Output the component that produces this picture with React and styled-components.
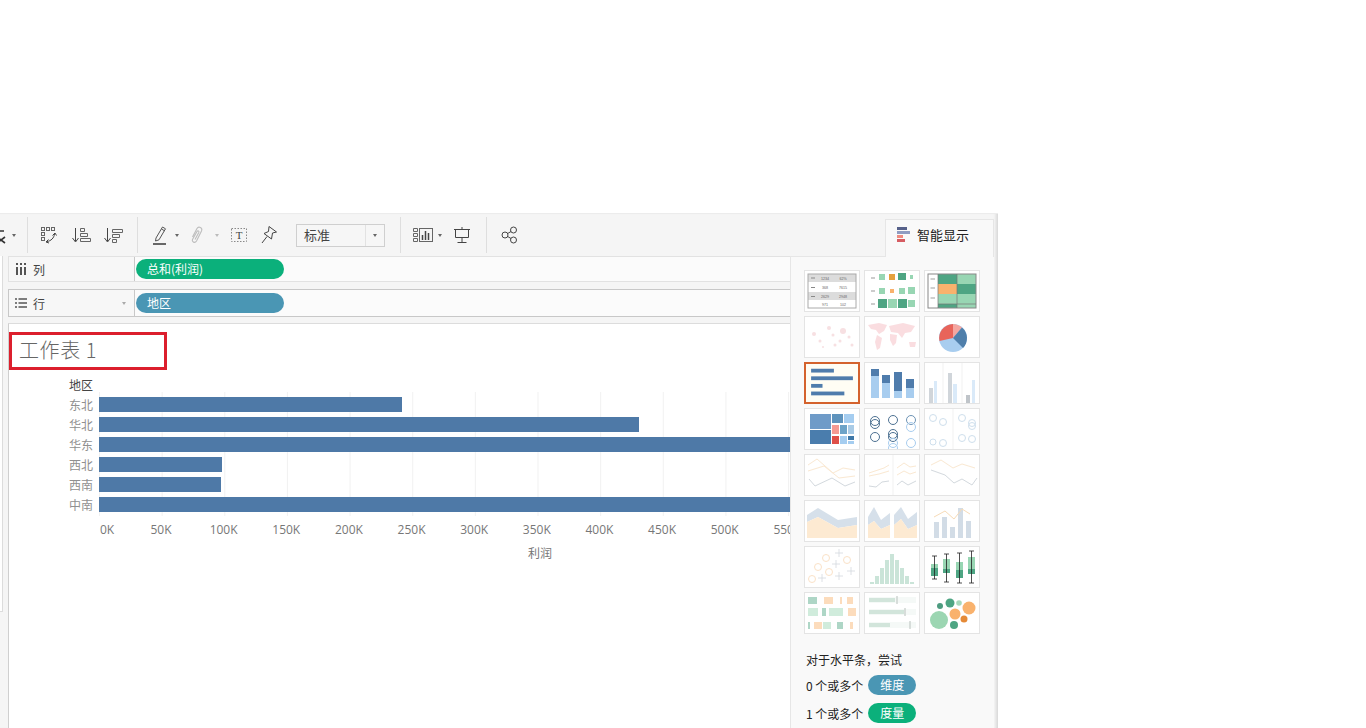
import styled, { createGlobalStyle } from "styled-components";

const GlobalStyle = createGlobalStyle`
  html, body {
    margin: 0;
    padding: 0;
    background: #fff;
    overflow: hidden;
    font-family: "Noto Sans CJK SC", "Liberation Sans", sans-serif;
  }
  * { box-sizing: border-box; }
`;

const Window = styled.div`
  margin-top: 213px;
  width: 998px;
  height: 515px;
  display: flex;
  flex-direction: column;
  overflow: hidden;
  background: #f5f5f5;
  border-top: 1px solid #ececec;
  box-shadow: inset -4px 0 3px -2px #d8d8d8;
`;

const Toolbar = styled.div`
  height: 42px;
  flex: none;
  display: flex;
  align-items: stretch;
`;

const Group = styled.div`
  display: flex;
  align-items: center;
  padding: 0 ${(p) => p.$right || 0}px 0 ${(p) => p.$left || 0}px;
  border-right: ${(p) => (p.$last ? "none" : "1px solid #dedede")};
  height: 36px;
  align-self: center;
`;

const Tool = styled.div`
  width: ${(p) => p.$w}px;
  height: 30px;
  flex: none;
  display: flex;
  align-items: center;
  justify-content: center;
  overflow: hidden;
`;

const Caret = styled.span`
  width: 0;
  height: 0;
  border-left: 2.5px solid transparent;
  border-right: 2.5px solid transparent;
  border-top: 3px solid ${(p) => p.$color || "#666"};
`;

const SelectBox = styled.div`
  width: 89px;
  height: 23px;
  margin-left: 14px;
  flex: none;
  display: flex;
  align-items: center;
  border: 1px solid #cfcfcf;
  background: #f6f6f6;
  font-size: 13px;
  color: #444;
`;

const SelectText = styled.span`
  flex: 1;
  padding: 0 0 1px 7px;
  line-height: 20px;
`;

const SelectArrow = styled.span`
  width: 19px;
  height: 21px;
  display: flex;
  align-items: center;
  justify-content: center;
  border-left: 1px solid #e2e2e2;
`;

const ShowMeTab = styled.div`
  margin: 4px 4px 0 auto;
  width: 109px;
  display: flex;
  align-items: center;
  gap: 7px;
  padding: 0 0 9px 11px;
  font-size: 13px;
  color: #222;
  background: #f9f9f9;
  border: 1px solid #e6e6e6;
  border-bottom: none;
  position: relative;
  top: 1px;
`;

const Body = styled.div`
  flex: 1;
  min-height: 0;
  display: flex;
`;

const LeftStub = styled.div`
  width: 8px;
  flex: none;
`;

const LeftCard = styled.div`
  width: 3px;
  height: 356px;
  background: #fff;
  border-right: 1px solid #dcdcdc;
  border-bottom: 1px solid #dcdcdc;
`;

const Center = styled.div`
  width: 782px;
  flex: none;
  display: flex;
  flex-direction: column;
  overflow: hidden;
`;

const ShelfRow = styled.div`
  height: ${(p) => p.$h}px;
  margin-bottom: ${(p) => p.$gap}px;
  flex: none;
  display: flex;
  background: #fbfbfb;
  border: 1px solid ${(p) => p.$line};
  border-right: none;
`;

const ShelfLabel = styled.div`
  width: 126px;
  flex: none;
  display: flex;
  align-items: center;
  gap: 6px;
  padding-left: 6px;
  font-size: 12px;
  color: #444;
  background: #f7f7f7;
  border-right: 1px solid #c8c8c8;
`;

const LabelCaret = styled.span`
  margin-left: auto;
  margin-right: 8px;
  display: flex;
`;

const ShelfDrop = styled.div`
  flex: 1;
  display: flex;
  align-items: center;
  padding-left: 1px;
`;

const Pill = styled.div`
  width: 148px;
  height: 20px;
  border-radius: 10px;
  background: ${(p) => p.$color};
  color: #fff;
  font-size: 12px;
  line-height: 20px;
  padding-left: 11px;
`;

const Sheet = styled.div`
  flex: 1;
  min-height: 0;
  background: #fff;
  border-top: 1px solid #dcdcdc;
  border-left: 1px solid #cfcfcf;
  overflow: hidden;
`;

const TitleBox = styled.div`
  width: 158px;
  height: 38px;
  margin-top: 8px;
  padding: 0 0 4px 7px;
  display: flex;
  align-items: center;
  border: 3px solid #dc1f2d;
  font-size: 20px;
  font-weight: 300;
  letter-spacing: 0.6px;
  color: #666;
`;

const Chart = styled.div`
  display: flex;
  margin-top: 5px;
`;

const LabelColumn = styled.div`
  width: 90px;
  flex: none;
  text-align: right;
  padding-right: 6px;
  font-size: 12px;
  line-height: 20px;
  color: #909090;
`;

const FieldName = styled.div`
  color: #444;
`;

const PlotColumn = styled.div`
  flex: 1;
  min-width: 0;
  margin-top: 17px;
`;

const Plot = styled.div`
  height: 124px;
  padding-top: 3px;
  overflow: hidden;
  background-size: 62.65px 100%;
  background-image: linear-gradient(90deg, #f1f1f1 1px, transparent 1px);
`;

const BarRow = styled.div`
  height: 20px;
  padding-top: 2px;
`;

const Bar = styled.div`
  height: 15px;
  background: #4e79a7;
`;

const AxisTicks = styled.div`
  display: flex;
  margin: 6px 0 0 -32px;
  height: 16px;
`;

const Tick = styled.div`
  width: 62.65px;
  flex: none;
  font-family: "Open Sans", "Liberation Sans", sans-serif;
  font-size: 12px;
  line-height: 16px;
  color: #777;
  padding-left: ${(p) => (p.$first ? "33px" : "0")};
  text-align: ${(p) => (p.$first ? "left" : "center")};
`;

const AxisTitle = styled.div`
  margin: 7px 0 0 429px;
  font-size: 12px;
  line-height: 16px;
  color: #777;
`;

const ShowMePanel = styled.div`
  width: 204px;
  flex: none;
  padding: 13px 14px 0 13px;
  background: #f9f9f9;
  border-left: 1px solid #e6e6e6;
  border-top: 1px solid #e6e6e6;
  margin-right: 4px;
`;

const ThumbGrid = styled.div`
  display: grid;
  grid-template-columns: repeat(3, 56px);
  grid-auto-rows: 42px;
  gap: 4px;
`;

const Thumb = styled.div`
  background: ${(p) => (p.$selected ? "#fffdf4" : "#fff")};
  border: ${(p) => (p.$selected ? "2px solid #d4622d" : "1px solid #e4e4e4")};
  overflow: hidden;

  svg {
    display: block;
    width: 100%;
    height: 100%;
    opacity: ${(p) => p.$fade || 1};
  }
`;

const Hint = styled.div`
  margin: 17px 0 0 2px;
  font-size: 12px;
  line-height: 18px;
  color: #222;
`;

const HintRow = styled.div`
  display: flex;
  align-items: center;
  gap: 5px;
  height: 20px;
  margin: ${(p) => p.$gap}px 0 0 2px;
  font-size: 12px;
  color: #222;
`;

const SmallPill = styled.span`
  width: 48px;
  height: 20px;
  border-radius: 10px;
  background: ${(p) => p.$color};
  color: #fff;
  text-align: center;
  line-height: 20px;
`;

const GREEN = "#0bb07b";
const TEAL = "#4a96b4";

const Ico = ({ w = 20, h = 20, children, ...rest }) => (
  <svg width={w} height={h} viewBox={`0 0 ${w} ${h}`} fill="none" stroke="#555" strokeWidth="1" {...rest}>
    {children}
  </svg>
);

const CutIcon = () => (
  <Ico w={10} h={20}>
    <path d="M-3 6 L4 6 M-3 12 L5 18 M-3 18 L5 12" stroke="#333" strokeWidth="1.6" />
  </Ico>
);

const SwapIcon = () => (
  <Ico>
    <g stroke="#666">
      <rect x="2.5" y="2.5" width="3" height="3" />
      <rect x="7.5" y="2.5" width="3" height="3" />
      <rect x="12.5" y="2.5" width="3" height="3" />
      <rect x="2.5" y="7.5" width="3" height="3" />
      <rect x="2.5" y="12.5" width="3" height="3" />
      <path d="M8 16.5 C12 16 15 13 15.5 9 M13.5 10.5 L16 8 L17.5 10.5 M9.5 14.5 L7 17 L10 18" stroke="#444" />
    </g>
  </Ico>
);

const SortIcon = ({ desc }) => (
  <Ico>
    <path d="M4.5 3 V16 M1.5 13 L4.5 17 L7.5 13" stroke="#444" />
    {desc ? (
      <path d="M9.5 4.5 H19.5 V7.5 H9.5 Z M9.5 9.5 H16.5 V12.5 H9.5 Z M9.5 14.5 H13.5 V17.5 H9.5 Z" stroke="#666" />
    ) : (
      <path d="M9.5 3.5 H13.5 V6.5 H9.5 Z M9.5 8.5 H16.5 V11.5 H9.5 Z M9.5 13.5 H19.5 V16.5 H9.5 Z" stroke="#666" />
    )}
  </Ico>
);

const PenIcon = () => (
  <Ico w={18} h={22}>
    <path d="M5 14 L11.5 3 L14.5 4.8 L8 15.8 L4.5 17 Z M10.5 5 L13.5 6.8" stroke="#555" />
    <path d="M2 20 H15" stroke="#444" strokeWidth="1.6" />
  </Ico>
);

const ClipIcon = () => (
  <Ico w={16} h={20}>
    <path
      d="M3.5 12 L8 3.5 C9.5 1 14 2.5 12.5 6 L7.5 16 C6 18.5 2.5 17 3.5 14.5 L8 6.5 C8.8 5.2 10.5 6 9.8 7.5 L6 14.5"
      stroke="#bdbdbd"
      strokeWidth="1.1"
    />
  </Ico>
);

const TextIcon = () => (
  <Ico w={18} h={18}>
    <rect x="1.5" y="2.5" width="15" height="13" stroke="#888" strokeDasharray="1.5 1.5" />
    <text x="9" y="13" textAnchor="middle" fontFamily="Liberation Serif, serif" fontSize="11" fill="#444" stroke="none">
      T
    </text>
  </Ico>
);

const PinIcon = () => (
  <Ico w={18} h={20}>
    <path d="M9 1.5 L16.5 7 L12.5 8 L11.5 14 L4 8.5 L8.5 6.5 Z M7 11.5 L2 18" stroke="#444" />
  </Ico>
);

const ChartIcon = () => (
  <Ico w={22} h={18}>
    <path d="M1.5 2.5 H5.5 V5.5 H1.5 Z M1.5 7.5 H5.5 V10.5 H1.5 Z M1.5 12.5 H5.5 V15.5 H1.5 Z" stroke="#666" />
    <rect x="7.5" y="2.5" width="13" height="13" stroke="#666" />
    <path d="M10.5 14 V9 M13.5 14 V5 M16.5 14 V7" stroke="#444" strokeWidth="1.5" />
  </Ico>
);

const ScreenIcon = () => (
  <Ico w={18} h={18}>
    <path d="M1 3.5 H17 M2.5 3.5 V11.5 H15.5 V3.5 M9 1 V3 M9 11.5 V16 M4.5 16.5 H13.5" stroke="#444" />
  </Ico>
);

const ShareIcon = () => (
  <Ico w={18} h={18}>
    <circle cx="12.5" cy="4" r="3" stroke="#444" />
    <circle cx="4" cy="9" r="3" stroke="#444" />
    <circle cx="12.5" cy="14" r="3" stroke="#444" />
    <path d="M6.7 7.5 L10 5.5 M6.7 10.5 L10 12.5" stroke="#444" />
  </Ico>
);

const ShowMeIcon = () => (
  <svg width="13" height="15" viewBox="0 0 13 15">
    <rect x="0" y="0" width="10" height="3" fill="#56618a" />
    <rect x="0" y="4" width="13" height="3" fill="#8f9cc2" />
    <rect x="0" y="8" width="6" height="3" fill="#ee8b80" />
    <rect x="0" y="12" width="8" height="3" fill="#d65c62" />
  </svg>
);

const ColumnsIcon = () => (
  <Ico w={12} h={14}>
    <path d="M2 1 V3 M6 1 V3 M10 1 V3 M2 5 V13 M6 5 V13 M10 5 V13" stroke="#555" strokeWidth="2" />
  </Ico>
);

const RowsIcon = () => (
  <Ico w={12} h={12}>
    <path d="M0 2 H2 M0 6 H2 M0 10 H2 M3.5 2 H12 M3.5 6 H12 M3.5 10 H12" stroke="#555" strokeWidth="1.4" />
  </Ico>
);

const Thumbnail = ({ children }) => <svg viewBox="0 0 54 40">{children}</svg>;

const Rects = ({ items }) =>
  items.map(([x, y, w, h, fill], i) => <rect key={i} x={x} y={y} width={w} height={h} fill={fill} />);

const Lines = ({ items, width = 1 }) =>
  items.map(([points, stroke], i) => (
    <polyline key={i} points={points} fill="none" stroke={stroke} strokeWidth={width} />
  ));

const Rings = ({ items, color, width = 1 }) =>
  items.map(([cx, cy, r, stroke], i) => (
    <circle key={i} cx={cx} cy={cy} r={r} fill="none" stroke={stroke || color} strokeWidth={width} />
  ));

const Discs = ({ items }) => items.map(([cx, cy, r, fill], i) => <circle key={i} cx={cx} cy={cy} r={r} fill={fill} />);

const Plus = ({ items, color }) =>
  items.map(([x, y], i) => (
    <path key={i} d={`M${x - 4} ${y} H${x + 4} M${x} ${y - 4} V${y + 4}`} stroke={color} strokeWidth="0.8" />
  ));

const CellText = ({ x, y, children, fill = "#666" }) => (
  <text x={x} y={y} fontSize="3.6" fill={fill} textAnchor="middle" fontFamily="Liberation Sans, sans-serif">
    {children}
  </text>
);

const O = "#f9b26d";
const DG = "#4ea583";
const LG = "#98d6b3";
const B = "#4f7cac";
const LB = "#a8cdef";

const thumbs = [
  {
    body: (
      <>
        <Rects items={[[3, 3, 48, 8, "#dcdcdc"], [3, 21, 48, 8, "#dcdcdc"]]} />
        <rect x="3" y="3" width="48" height="34" fill="none" stroke="#aaa" />
        <CellText x="20" y="8.5">1234</CellText>
        <CellText x="38" y="8.5">62%</CellText>
        <CellText x="20" y="17.5">368</CellText>
        <CellText x="38" y="17.5">7615</CellText>
        <CellText x="20" y="26.5">2629</CellText>
        <CellText x="38" y="26.5">2948</CellText>
        <CellText x="20" y="34.5">971</CellText>
        <CellText x="38" y="34.5">102</CellText>
        <path d="M6 7 H10 M6 16.5 H10 M6 25.5 H10" stroke="#888" />
      </>
    ),
  },
  {
    body: (
      <>
        <path d="M6 7 H10 M6 20 H10 M6 33 H10" stroke="#999" />
        <Rects
          items={[
            [14, 3, 6, 6, LG], [24, 3, 6, 6, "#e5a13e"], [33, 2, 8, 7, DG], [45, 4, 3, 4, LG],
            [14, 17, 6, 6, LG], [25, 18, 4, 4, O], [34, 17, 6, 6, LG], [43, 16, 7, 7, LG],
            [13, 28, 9, 9, DG], [23, 28, 9, 9, LG], [33, 28, 9, 9, DG], [43, 29, 7, 7, LG],
          ]}
        />
      </>
    ),
  },
  {
    body: (
      <>
        <Rects
          items={[
            [13, 3, 19, 10, DG], [32, 3, 19, 10, LG],
            [13, 13, 19, 10, O], [32, 13, 19, 10, DG],
            [13, 23, 19, 10, LG], [32, 23, 19, 10, LG],
            [13, 33, 19, 4, DG], [32, 33, 19, 4, LG],
          ]}
        />
        <rect x="3" y="3" width="48" height="34" fill="none" stroke="#888" />
        <path d="M13 3 V37 M32 3 V37 M5.5 8 H10 M5.5 17 H10 M5.5 27 H10 M13 33 H51" stroke="#777" strokeWidth="0.7" />
      </>
    ),
  },
  {
    fade: 0.3,
    body: (
      <Discs
        items={[
          [9, 17, 2, "#e79aa0"], [15, 24, 1.5, "#e79aa0"], [24, 11, 2, "#e79aa0"], [28, 18, 1.5, "#e79aa0"],
          [38, 14, 3, "#e79aa0"], [44, 20, 1.5, "#e79aa0"], [30, 28, 1.5, "#e79aa0"], [47, 28, 1.5, "#e79aa0"],
          [18, 30, 1, "#e79aa0"], [35, 24, 1.5, "#e79aa0"],
        ]}
      />
    ),
  },
  {
    fade: 0.45,
    body: (
      <path
        d="M3 8 L14 6 L22 8 L19 14 L14 17 L11 13 L6 12 Z M12 18 L17 21 L15 31 L12 33 L10 25 Z M24 9 L38 6 L50 9 L46 15 L40 16 L37 21 L33 16 L26 15 Z M25 17 L32 18 L31 26 L28 29 L25 23 Z M44 25 L51 25 L50 30 L45 30 Z"
        fill="#f4b6bc"
      />
    ),
  },
  {
    body: (
      <>
        <circle cx="28" cy="21" r="14" fill={LB} />
        <path d="M28 21 L14.5 24 A14 14 0 0 1 28 7 Z" fill="#e8645a" />
        <path d="M28 21 L28 7 A14 14 0 0 1 37 10.5 Z" fill="#f4a6a0" />
        <path d="M28 21 L37 10.5 A14 14 0 0 1 38 31 Z" fill="#4f7fab" />
      </>
    ),
  },
  {
    selected: true,
    body: <Rects items={[[5, 5, 24, 4, B], [5, 13, 44, 4, B], [5, 21, 12, 4, B], [5, 29, 35, 4, B]]} />,
  },
  {
    body: (
      <Rects
        items={[
          [6, 6, 8, 7, B], [6, 13, 8, 22, LB],
          [17, 12, 8, 8, B], [17, 20, 8, 15, LB],
          [29, 9, 8, 19, B], [29, 28, 8, 7, LB],
          [41, 16, 8, 9, B], [41, 25, 8, 10, LB],
        ]}
      />
    ),
  },
  {
    fade: 0.55,
    body: (
      <>
        <path d="M18 0 V40 M37 0 V40" stroke="#ddd" strokeWidth="0.7" />
        <Rects
          items={[
            [4, 25, 4, 15, "#aab3bd"], [9, 18, 3, 22, "#bcdaf5"],
            [23, 10, 4, 30, "#aab3bd"], [28, 21, 4, 19, "#bcdaf5"],
            [41, 32, 4, 8, "#8b949e"], [47, 17, 3, 23, "#bcdaf5"],
          ]}
        />
      </>
    ),
  },
  {
    body: (
      <Rects
        items={[
          [5, 5, 21, 15, "#6f9bc8"], [5, 21, 21, 14, "#4a7dad"],
          [27, 5, 11, 9, "#5e93bd"], [39, 5, 10, 9, "#a5cdf0"],
          [27, 16, 7, 9, "#f59a93"], [35, 16, 7, 9, "#6da3c8"], [43, 16, 6, 9, "#a9cbe6"],
          [27, 27, 7, 8, "#df4f48"], [35, 27, 7, 8, "#a5cdf0"], [43, 27, 6, 4, "#3f78a8"], [43, 32, 6, 3, "#a5cdf0"],
        ]}
      />
    ),
  },
  {
    body: (
      <Rings
        color="#4d7192"
        items={[
          [10, 12, 4.5], [10, 15, 4.5], [10, 28, 4.5], [28, 11, 4.5], [28, 25, 4.5], [28, 28, 4.5], [28, 39, 4.5, "#a8cdef"],
          [46, 11, 4.5, "#6d93b5"], [46, 18, 4.5, "#a8cdef"], [46, 34, 4.5, "#a8cdef"], [28, 34, 4.5, "#a8cdef"],
        ]}
      />
    ),
  },
  {
    fade: 0.5,
    body: (
      <>
        <path d="M28 0 V40" stroke="#ddd" strokeWidth="0.7" />
        <Rings
          color="#9fc0dc"
          items={[[8, 9, 3.5], [18, 13, 3.5], [8, 33, 3], [18, 34, 3.5], [37, 9, 3.5], [47, 14, 3.5], [47, 17, 3.5], [37, 29, 3.5], [47, 30, 3.5]]}
        />
      </>
    ),
  },
  {
    fade: 0.5,
    body: (
      <Lines
        items={[
          ["3,10 12,4 28,18 38,13 50,15", "#f6d3a6"],
          ["3,16 19,11 34,23 50,21", "#f6d3a6"],
          ["4,24 10,31 27,23 40,31 50,27", "#a9b4be"],
        ]}
      />
    ),
  },
  {
    fade: 0.5,
    body: (
      <>
        <path d="M28 0 V40" stroke="#ddd" strokeWidth="0.7" />
        <Lines
          items={[
            ["4,18 13,15 19,13 24,10", "#f6d3a6"],
            ["4,21 14,19 24,16", "#f6d3a6"],
            ["4,31 11,32 17,27 24,26", "#a9b4be"],
            ["32,13 39,8 45,12 51,11", "#f6d3a6"],
            ["32,20 39,16 45,19 51,17", "#f6d3a6"],
            ["32,30 37,26 43,30 51,26", "#a9b4be"],
          ]}
        />
      </>
    ),
  },
  {
    fade: 0.5,
    body: (
      <Lines
        items={[
          ["6,10 16,5 28,13 37,9 50,13", "#f6d3a6"],
          ["6,15 20,20 29,28 37,24 47,30 52,23", "#a9b4be"],
        ]}
      />
    ),
  },
  {
    fade: 0.75,
    body: (
      <>
        <path d="M2 14 L13 7 L33 19 L52 16 V24 L33 27 L13 16 L2 21 Z" fill="#c9d6e3" />
        <path d="M2 21 L13 16 L33 27 L52 24 V37 H2 Z" fill="#fde3c4" />
      </>
    ),
  },
  {
    fade: 0.75,
    body: (
      <>
        <path d="M3 16 L9 6 L16 19 L25 12 V24 L16 28 L9 20 L3 24 Z M29 14 L36 6 L43 18 L52 11 V24 L43 28 L36 18 L29 24 Z" fill="#c9d6e3" />
        <path d="M3 24 L9 20 L16 28 L25 24 V37 H3 Z M29 24 L36 18 L43 28 L52 24 V37 H29 Z" fill="#fde3c4" />
      </>
    ),
  },
  {
    fade: 0.8,
    body: (
      <>
        <Rects
          items={[
            [9, 21, 5, 16, "#c7d4e0"], [17, 16, 5, 21, "#c7d4e0"], [25, 26, 5, 11, "#c7d4e0"],
            [33, 7, 5, 30, "#c7d4e0"], [41, 20, 5, 17, "#c7d4e0"],
          ]}
        />
        <Lines items={[["9,16 20,10 29,18 37,8 45,13", "#f6d3a6"]]} />
      </>
    ),
  },
  {
    fade: 0.6,
    body: (
      <>
        <Rings color="#f8cfa3" items={[[21, 11, 3.5], [13, 20, 3.5], [24, 25, 3.5], [42, 13, 3.5], [7, 32, 3.5]]} />
        <Plus color="#b9c2ca" items={[[34, 6], [31, 17], [46, 24], [17, 31], [34, 29]]} />
      </>
    ),
  },
  {
    fade: 0.75,
    body: (
      <Rects
        items={[
          [5, 35, 4, 2, "#b9dccb"], [10, 29, 4, 8, "#b9dccb"], [15, 21, 4, 16, "#b9dccb"],
          [20, 13, 4, 24, "#b9dccb"], [25, 7, 4, 30, "#b9dccb"], [30, 13, 4, 24, "#b9dccb"],
          [35, 21, 4, 16, "#b9dccb"], [40, 29, 4, 8, "#b9dccb"], [45, 35, 4, 2, "#b9dccb"],
        ]}
      />
    ),
  },
  {
    body: (
      <>
        <Rects
          items={[
            [6, 17, 7, 4, LG], [6, 21, 7, 8, DG],
            [18, 12, 7, 10, LG], [18, 22, 7, 4, DG],
            [31, 15, 7, 8, LG], [31, 23, 7, 8, DG],
            [43, 10, 7, 12, LG], [43, 22, 7, 5, DG],
          ]}
        />
        <path
          d="M9.5 9 V32 M7 9 H12 M7 32 H12 M21.5 7 V35 M19 7 H24 M19 35 H24 M34.5 6 V36 M32 6 H37 M32 36 H37 M46.5 4 V36 M44 4 H49 M44 36 H49"
          stroke="#222"
          strokeWidth="0.8"
          fill="none"
        />
      </>
    ),
  },
  {
    fade: 0.45,
    body: (
      <Rects
        items={[
          [3, 4, 9, 7, DG], [19, 4, 9, 7, O], [35, 4, 2, 7, O], [42, 4, 6, 7, O],
          [3, 15, 10, 8, LG], [17, 15, 4, 8, DG], [24, 15, 14, 8, LG], [43, 15, 8, 8, O],
          [3, 29, 2, 7, DG], [9, 29, 8, 7, O], [18, 29, 8, 7, LG], [32, 29, 6, 7, DG], [45, 29, 3, 7, O],
        ]}
      />
    ),
  },
  {
    fade: 0.6,
    body: (
      <>
        <Rects
          items={[
            [4, 4, 47, 6, "#f0f6f2"], [4, 16, 47, 6, "#f0f6f2"], [4, 29, 47, 6, "#f0f6f2"],
            [4, 5, 26, 4, "#b5d5c4"], [4, 17, 35, 4, "#b5d5c4"], [4, 30, 21, 4, "#b5d5c4"],
          ]}
        />
        <path d="M32 3 V11 M40 15 V23 M45 28 V36" stroke="#8a9a92" />
      </>
    ),
  },
  {
    body: (
      <Discs
        items={[
          [14, 27, 9, "#9cd6b2"], [25, 10, 4.5, DG], [15, 13, 3, "#4e9c80"], [34, 10, 2.8, "#a8d9bc"],
          [44, 15, 6.5, O], [30, 21, 5.5, O], [39, 26, 3.5, "#e58a37"], [29, 32, 4, DG],
        ]}
      />
    ),
  },
];

const regions = [
  { name: "东北", value: 241800 },
  { name: "华北", value: 431000 },
  { name: "华东", value: 610000 },
  { name: "西北", value: 98000 },
  { name: "西南", value: 97400 },
  { name: "中南", value: 590000 },
];

const ticks = ["0K", "50K", "100K", "150K", "200K", "250K", "300K", "350K", "400K", "450K", "500K", "550K"];

export default function App() {
  return (
    <>
      <GlobalStyle />
      <Window>
        <Toolbar>
          <Group $right={9}>
            <Tool $w={10}>
              <CutIcon />
            </Tool>
            <Tool $w={8}>
              <Caret />
            </Tool>
          </Group>
          <Group $left={5} $right={8}>
            <Tool $w={32}>
              <SwapIcon />
            </Tool>
            <Tool $w={32}>
              <SortIcon />
            </Tool>
            <Tool $w={32}>
              <SortIcon desc />
            </Tool>
          </Group>
          <Group $left={10} $right={15}>
            <Tool $w={24}>
              <PenIcon />
            </Tool>
            <Tool $w={10}>
              <Caret />
            </Tool>
            <Tool $w={30}>
              <ClipIcon />
            </Tool>
            <Tool $w={10}>
              <Caret $color="#bbb" />
            </Tool>
            <Tool $w={34}>
              <TextIcon />
            </Tool>
            <Tool $w={26}>
              <PinIcon />
            </Tool>
            <SelectBox>
              <SelectText>标准</SelectText>
              <SelectArrow>
                <Caret />
              </SelectArrow>
            </SelectBox>
          </Group>
          <Group $left={10} $right={7}>
            <Tool $w={24}>
              <ChartIcon />
            </Tool>
            <Tool $w={10}>
              <Caret />
            </Tool>
            <Tool $w={34}>
              <ScreenIcon />
            </Tool>
          </Group>
          <Group $left={14} $last>
            <Tool $w={18}>
              <ShareIcon />
            </Tool>
          </Group>
          <ShowMeTab>
            <ShowMeIcon />
            智能显示
          </ShowMeTab>
        </Toolbar>
        <Body>
          <LeftStub>
            <LeftCard />
          </LeftStub>
          <Center>
            <ShelfRow $h={26} $gap={7} $line="#e2e2e2">
              <ShelfLabel>
                <ColumnsIcon />列
              </ShelfLabel>
              <ShelfDrop>
                <Pill $color={GREEN}>总和(利润)</Pill>
              </ShelfDrop>
            </ShelfRow>
            <ShelfRow $h={28} $gap={6} $line="#c8c8c8">
              <ShelfLabel>
                <RowsIcon />行
                <LabelCaret>
                  <Caret $color="#aaa" />
                </LabelCaret>
              </ShelfLabel>
              <ShelfDrop>
                <Pill $color={TEAL}>地区</Pill>
              </ShelfDrop>
            </ShelfRow>
            <Sheet>
              <TitleBox>工作表 1</TitleBox>
              <Chart>
                <LabelColumn>
                  <FieldName>地区</FieldName>
                  {regions.map((r) => (
                    <div key={r.name}>{r.name}</div>
                  ))}
                </LabelColumn>
                <PlotColumn>
                  <Plot>
                    {regions.map((r) => (
                      <BarRow key={r.name}>
                        <Bar style={{ width: (r.value * 62.65) / 50000 }} />
                      </BarRow>
                    ))}
                  </Plot>
                  <AxisTicks>
                    {ticks.map((t, i) => (
                      <Tick key={t} $first={i === 0}>
                        {t}
                      </Tick>
                    ))}
                  </AxisTicks>
                  <AxisTitle>利润</AxisTitle>
                </PlotColumn>
              </Chart>
            </Sheet>
          </Center>
          <ShowMePanel>
            <ThumbGrid>
              {thumbs.map((t, i) => (
                <Thumb key={i} $selected={t.selected} $fade={t.fade}>
                  <Thumbnail>{t.body}</Thumbnail>
                </Thumb>
              ))}
            </ThumbGrid>
            <Hint>对于水平条，尝试</Hint>
            <HintRow $gap={6}>
              0 个或多个<SmallPill $color={TEAL}>维度</SmallPill>
            </HintRow>
            <HintRow $gap={8}>
              1 个或多个<SmallPill $color={GREEN}>度量</SmallPill>
            </HintRow>
          </ShowMePanel>
        </Body>
      </Window>
    </>
  );
}
